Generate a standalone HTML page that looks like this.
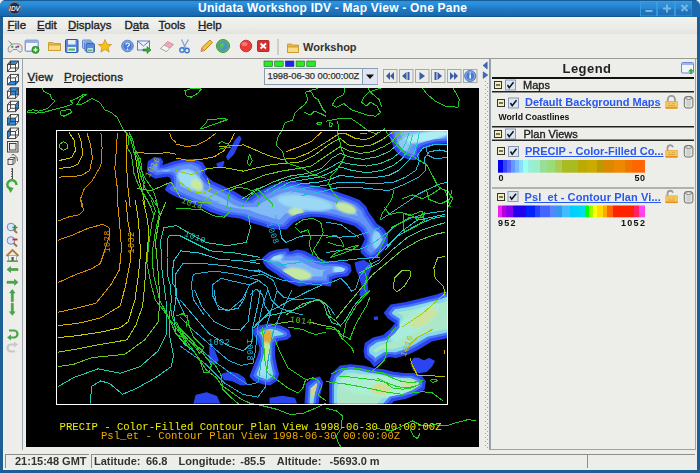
<!DOCTYPE html>
<html><head><meta charset="utf-8">
<style>
*{margin:0;padding:0;box-sizing:border-box}
html,body{width:700px;height:473px;overflow:hidden;background:#edede9;font-family:"Liberation Sans",sans-serif;color:#222}
.a{position:absolute}
.t{position:absolute;white-space:nowrap;line-height:1}
#title{left:0;top:0;width:700px;height:17px;background:linear-gradient(#1a5c94 0,#1a5c94 1px,#2a92e2 1px,#2890de 4px,#1f78c2 9px,#1a6aae 15px,#14609e 16px,#0e4c82 17px)}
#frameL{left:0;top:17px;width:3px;height:456px;background:#1d5f95}
#frameR{left:697px;top:17px;width:3px;height:456px;background:#1d5f95}
#frameB{left:0;top:470px;width:700px;height:3px;background:#1d5f95}
.menu{font-size:11.5px;top:19.8px;color:#222;-webkit-text-stroke:0.35px #222}
.u{text-decoration:underline;text-underline-offset:0.7px}
svg{position:absolute;overflow:visible}
.st{top:455.5px;font-size:11px;font-weight:bold;color:#333}
</style></head><body>
<div id="title" class="a"></div>
<div class="t" style="left:198px;top:2px;font-size:12px;font-weight:bold;color:#fff;letter-spacing:0.21px">Unidata Workshop IDV - Map View - One Pane</div>
<svg style="left:0;top:0" width="700" height="17" viewBox="0 0 700 17">
<defs><linearGradient id="tb" x1="0" y1="0" x2="0" y2="1"><stop offset="0" stop-color="#3296de"/><stop offset="0.5" stop-color="#2886d0"/><stop offset="0.55" stop-color="#2078c0"/><stop offset="1" stop-color="#1c6eb4"/></linearGradient></defs>
<g fill="url(#tb)" stroke="#3d9ee6" stroke-width="0.8">
<rect x="640.5" y="1.5" width="16" height="14.5"/>
<rect x="657.5" y="1.5" width="17" height="14.5"/>
<rect x="675.5" y="1.5" width="16.5" height="14.5"/>
</g>
<path d="M645.5,11 L652.5,11" stroke="#78b6e2" stroke-width="2"/>
<path d="M663,8.5 L671,8.5 M667,4.5 L667,12.5" stroke="#78b6e2" stroke-width="2"/>
<path d="M681.5,5 L687.5,11 M687.5,5 L681.5,11" stroke="#78b6e2" stroke-width="2"/>
<path d="M0,0 L4,0 Q1,1 0,4Z" fill="#edede9"/>
<circle cx="14.5" cy="8.2" r="5.8" fill="#1a2a5a" stroke="#8a7a40" stroke-width="0.8"/>
<text x="14.5" y="10.6" fill="#e8e8f0" font-family="Liberation Sans" font-weight="bold" font-size="6.5" text-anchor="middle" font-style="italic">IDV</text>
<path d="M692,1 L696,1 Q699,2 700,6 L700,17 L692,17Z" fill="#1a6aae"/>
<path d="M696,0 L700,0 L700,4 Q699,1 696,0Z" fill="#edede9"/>
</svg>
<div class="a" style="left:0;top:17px;width:700px;height:17px;background:linear-gradient(#f2f2ee,#ecece8 60%,#e2e2de)"></div>
<div id="frameL" class="a"></div><div id="frameR" class="a"></div><div id="frameB" class="a"></div>

<!-- menu bar -->
<div class="t menu" style="left:7.5px"><span class="u">F</span>ile</div>
<div class="t menu" style="left:37px"><span class="u">E</span>dit</div>
<div class="t menu" style="left:68px"><span class="u">D</span>isplays</div>
<div class="t menu" style="left:124.5px">D<span class="u">a</span>ta</div>
<div class="t menu" style="left:158.5px"><span class="u">T</span>ools</div>
<div class="t menu" style="left:198px"><span class="u">H</span>elp</div>

<!-- toolbar bottom line -->
<div class="a" style="left:3px;top:58px;width:694px;height:1px;background:#9a9a96"></div>

<svg style="left:0;top:0" width="700" height="60" viewBox="0 0 700 60">
<!-- 1 gamepad -->
<g>
<path d="M8.5,41 L12.5,44.5" stroke="#777" stroke-width="1" fill="none"/>
<path d="M10,45.5 C12,43.5 18,43 21,45 C22.5,47 22.5,50.5 21,52 C19.5,52.5 18,51 17,49.5 L13,49.5 C12,51 10.5,52.5 9,52 C7.5,50.5 8,47 10,45.5Z" fill="#e8e8e8" stroke="#8a8a8a" stroke-width="0.9"/>
<circle cx="18.2" cy="46.6" r="1.1" fill="#d42020"/><circle cx="16.3" cy="47.3" r="1" fill="#3060d0"/>
<path d="M11,46.8 L13.5,46.8 M12.2,45.6 L12.2,48" stroke="#30a030" stroke-width="1"/>
</g>
<!-- 2 window with green plus -->
<g>
<rect x="25.2" y="40.2" width="13" height="11" rx="1" fill="#f4f6fa" stroke="#5a7ec8" stroke-width="1"/>
<rect x="25.7" y="40.7" width="12" height="2.3" fill="#8fb0e8"/>
<circle cx="35.5" cy="49.8" r="3.6" fill="#3aa83a" stroke="#1e7a1e" stroke-width="0.7"/>
<path d="M35.5,47.8 L35.5,51.8 M33.5,49.8 L37.5,49.8" stroke="#fff" stroke-width="1.2"/>
</g>
<!-- 3 folder -->
<g>
<path d="M48.5,42.5 L53,42.5 L54,43.5 L60.5,43.5 L60.5,50.5 L48.5,50.5Z" fill="#e8b84a" stroke="#c8922a" stroke-width="0.8"/>
<path d="M48.5,45 L60.5,45 L60.5,50.5 L48.5,50.5Z" fill="#f8dc80" stroke="#c8922a" stroke-width="0.8"/>
</g>
<!-- 4 floppy -->
<g>
<rect x="65.5" y="39.5" width="12.5" height="13" rx="1.2" fill="#5a86d8" stroke="#2a56a8" stroke-width="1"/>
<rect x="68" y="40" width="7.5" height="4.5" fill="#e8eef8"/>
<rect x="67.5" y="47" width="8.5" height="5" fill="#e8f0f8"/>
<rect x="68.5" y="48.5" width="6.5" height="2.2" fill="#58b858"/>
</g>
<!-- 5 multi floppy -->
<g>
<rect x="82.5" y="40" width="8.5" height="8.5" rx="1" fill="#a8c4ec" stroke="#4a76c8" stroke-width="0.8"/>
<rect x="84.5" y="42" width="8.5" height="8.5" rx="1" fill="#a8c4ec" stroke="#4a76c8" stroke-width="0.8"/>
<rect x="86" y="43.5" width="8.5" height="8.8" rx="1" fill="#5a86d8" stroke="#2a56a8" stroke-width="0.8"/>
<rect x="87.5" y="48.2" width="5.5" height="3.6" fill="#e8f0f8"/>
<rect x="88" y="49.5" width="4.5" height="1.6" fill="#58b858"/>
</g>
<!-- 6 star -->
<path d="M105,39.5 L106.9,44.3 L111.6,44.5 L107.9,47.5 L109.2,52 L105,49.4 L100.8,52 L102.1,47.5 L98.4,44.5 L103.1,44.3Z" fill="#f5c21a" stroke="#d09010" stroke-width="0.8"/>
<!-- 7 help -->
<g>
<circle cx="127.5" cy="46" r="5.8" fill="#7aa4e8" stroke="#4a74c0" stroke-width="0.9"/>
<circle cx="127.5" cy="46" r="4" fill="#4a7ad0"/>
<path d="M125.8,44.6 C125.8,42.5 129.3,42.5 129.3,44.5 C129.3,45.8 127.5,46 127.5,47.3" stroke="#fff" stroke-width="1.2" fill="none"/>
<circle cx="127.5" cy="49.2" r="0.8" fill="#fff"/>
</g>
<!-- 8 mail -->
<g>
<rect x="137.5" y="41" width="12" height="9" fill="#eef2fa" stroke="#5a7ec8" stroke-width="1"/>
<path d="M137.5,41 L143.5,46 L149.5,41" stroke="#5a7ec8" stroke-width="1" fill="none"/>
<path d="M143,49 L147,49 L147,46.5 L151,50 L147,53.5 L147,51 L143,51Z" fill="#3aa83a" stroke="#1e7a1e" stroke-width="0.6"/>
</g>
<!-- 9 eraser -->
<g>
<path d="M160.5,48.5 L167.5,41.5 L173.5,44.5 L166.5,51.5Z" fill="#f0a8b8" stroke="#c88898" stroke-width="0.8"/>
<path d="M160.5,48.5 L164,45 L170,48 L166.5,51.5Z" fill="#f4f4f4" stroke="#a0a0a0" stroke-width="0.8"/>
</g>
<!-- 10 scissors -->
<g stroke="#3a78d0" fill="none">
<path d="M181.5,39.5 L185.5,48 M188.5,39.5 L183.5,48" stroke-width="1.2" stroke="#7aa0d8"/>
<circle cx="182" cy="50" r="2.2" stroke-width="1.4"/>
<circle cx="187" cy="50.5" r="2.2" stroke-width="1.4"/>
</g>
<!-- 11 pencil -->
<g>
<path d="M201,51.5 L202,47.5 L210,40 L212.5,42.5 L204.5,50.5Z" fill="#f0c040" stroke="#b88010" stroke-width="0.9"/>
<path d="M201,51.5 L202,47.5 L204.5,50.5Z" fill="#e89060"/>
</g>
<!-- 12 globe -->
<g>
<circle cx="223" cy="46" r="6.5" fill="#58b858" stroke="#3a8a3a" stroke-width="0.9"/>
<circle cx="223" cy="46" r="4.6" fill="#4a90d8"/>
<path d="M220,43.5 L223.5,42.5 L225,45 L222.5,47.5 L221.5,49.5 L220,47Z" fill="#58c058"/>
</g>
<!-- 13 red circle -->
<circle cx="246" cy="46" r="5.8" fill="#ea3a3a" stroke="#c02020" stroke-width="0.8"/>
<ellipse cx="244.5" cy="44" rx="3" ry="2" fill="#f89090" opacity="0.7"/>
<!-- 14 red X -->
<g>
<rect x="257.5" y="40.5" width="11.5" height="11" rx="1" fill="#d83030" stroke="#a01818" stroke-width="0.8"/>
<path d="M260.5,43.5 L266,48.5 M266,43.5 L260.5,48.5" stroke="#fff" stroke-width="1.8"/>
</g>
<!-- separator -->
<rect x="277.5" y="39" width="1" height="16" fill="#b0b0ac"/>
<!-- folder -->
<g>
<path d="M287.5,44 L291.5,44 L292.5,45 L298.5,45 L298.5,52.5 L287.5,52.5Z" fill="#e8b84a" stroke="#c8922a" stroke-width="0.8"/>
<path d="M287.5,47 L298.5,47 L298.5,52.5 L287.5,52.5Z" fill="#f8dc80" stroke="#c8922a" stroke-width="0.8"/>
</g>
</svg>
<div class="t" style="left:303px;top:42px;font-size:11px;font-weight:bold;color:#333">Workshop</div>

<!-- left toolbar -->
<svg style="left:0;top:0" width="24" height="360" viewBox="0 0 24 360">
<defs>
<g id="cube" fill="none" stroke="#3a3a3a" stroke-width="0.9">
<rect x="7.5" y="64.5" width="8" height="7"/>
<rect x="10.5" y="61" width="8" height="7"/>
<path d="M7.5,64.5 L10.5,61 M15.5,64.5 L18.5,61 M15.5,71.5 L18.5,68 M7.5,71.5 L10.5,68"/>
</g>
<path id="cubebg" d="M7.5,64.5 L10.5,61 L18.5,61 L18.5,68 L15.5,71.5 L7.5,71.5Z" fill="#fafafa"/>
</defs>
<!-- cube 1 top -->
<use href="#cubebg"/><path d="M7.5,64.5 L10.5,61 L18.5,61 L15.5,64.5Z" fill="#2a8ae0"/>
<use href="#cube"/>
<!-- cube 2 bottom -->
<g transform="translate(0,13.4)"><use href="#cubebg"/><path d="M7.5,71.5 L10.5,68 L18.5,68 L15.5,71.5Z" fill="#2a8ae0"/><use href="#cube"/></g>
<!-- cube 3 back -->
<g transform="translate(0,26.8)"><use href="#cubebg"/><rect x="10.5" y="61" width="8" height="7" fill="#2a8ae0"/><use href="#cube"/></g>
<!-- cube 4 right -->
<g transform="translate(0,40.2)"><use href="#cubebg"/><path d="M15.5,64.5 L18.5,61 L18.5,68 L15.5,71.5Z" fill="#2a8ae0"/><use href="#cube"/></g>
<!-- cube 5 front -->
<g transform="translate(0,53.6)"><use href="#cubebg"/><rect x="7.5" y="64.5" width="8" height="7" fill="#2a8ae0"/><use href="#cube"/></g>
<!-- cube 6 left -->
<g transform="translate(0,67)"><use href="#cubebg"/><path d="M7.5,64.5 L10.5,61 L10.5,68 L7.5,71.5Z" fill="#2a8ae0"/><use href="#cube"/></g>
<!-- frame -->
<g fill="none" stroke="#333" stroke-width="0.9">
<rect x="7.5" y="141.5" width="10.5" height="10.5"/>
<rect x="9.5" y="143.5" width="6.5" height="6.5"/>
</g>
<!-- rotate -->
<g fill="none" stroke="#333" stroke-width="0.8">
<rect x="8" y="159.5" width="5" height="5"/>
<path d="M8,159.5 L10,157.5 L15,157.5 L13,159.5 M15,157.5 L15,162.5 L13,164.5"/>
<path d="M11.5,155 L14,154.5 L17,157.5 L17.5,161" />
</g>
<!-- ruler -->
<path d="M12.5,168 L12.5,179 M11,169 L12.5,169 M11,171.5 L12.5,171.5 M11,174 L12.5,174 M11,176.5 L12.5,176.5 M11,179 L12.5,179" stroke="#444" stroke-width="0.9" fill="none"/>
<!-- green refresh -->
<path d="M9.2,188.5 A4.6,4.6 0 1 1 16.5,185" fill="none" stroke="#3aa83a" stroke-width="2.4"/>
<path d="M7,186 L10.5,193 L13.5,188Z" fill="#3aa83a"/>
<!-- zoom + -->
<g>
<circle cx="11" cy="227" r="3.8" fill="#d8e4f8" stroke="#6a8ad0" stroke-width="1"/>
<path d="M13.5,229.5 L17,233" stroke="#a07040" stroke-width="1.8"/>
<path d="M15,225 L15,230 M12.5,227.5 L17.5,227.5" stroke="#2a9a2a" stroke-width="1.6"/>
</g>
<!-- zoom - -->
<g>
<circle cx="11" cy="240.5" r="3.8" fill="#d8e4f8" stroke="#6a8ad0" stroke-width="1"/>
<path d="M13.5,243 L17,246.5" stroke="#a07040" stroke-width="1.8"/>
<path d="M12.5,239.5 L17.5,239.5" stroke="#e02020" stroke-width="1.8"/>
</g>
<!-- house -->
<g>
<path d="M6.5,256 L12.5,250 L18.5,256" fill="none" stroke="#b87830" stroke-width="1.8"/>
<rect x="8.5" y="255.5" width="8" height="5.5" fill="#f0f0f0" stroke="#888" stroke-width="0.6"/>
<rect x="11.5" y="257" width="2.2" height="4" fill="#555"/>
<rect x="7" y="260.5" width="11" height="1.5" fill="#4aa84a"/>
</g>
<!-- left arrow -->
<path d="M7,269.5 L10.5,266.5 L10.5,268.5 L18,268.5 L18,270.5 L10.5,270.5 L10.5,272.5Z" fill="#4aa84a" stroke="#2a882a" stroke-width="0.5"/>
<!-- right arrow -->
<path d="M18,282.3 L14.5,279.3 L14.5,281.3 L7,281.3 L7,283.3 L14.5,283.3 L14.5,285.3Z" fill="#4aa84a" stroke="#2a882a" stroke-width="0.5"/>
<!-- up arrow -->
<path d="M12.3,289.5 L15,293 L13.3,293 L13.3,301.5 L11.3,301.5 L11.3,293 L9.6,293Z" fill="#4aa84a" stroke="#2a882a" stroke-width="0.5"/>
<!-- down arrow -->
<path d="M12.3,315.3 L15,311.8 L13.3,311.8 L13.3,303.3 L11.3,303.3 L11.3,311.8 L9.6,311.8Z" fill="#4aa84a" stroke="#2a882a" stroke-width="0.5"/>
<!-- green uturn -->
<path d="M9,330.5 L14,330.5 A3.5,3.5 0 0 1 14,337.5 L10,337.5" fill="none" stroke="#4aa84a" stroke-width="2.2"/>
<path d="M7,337.5 L11,334.5 L11,340.5Z" fill="#4aa84a"/>
<!-- gray uturn -->
<path d="M16,344.5 L11,344.5 A3.5,3.5 0 0 0 11,351.5 L15,351.5" fill="none" stroke="#c8c8c8" stroke-width="2.2"/>
<path d="M18,344.5 L14,341.5 L14,347.5Z" fill="#c8c8c8"/>
</svg>


<!-- map panel -->
<div class="a" style="left:21.5px;top:59px;width:1px;height:391px;background:#9aa3b0"></div>
<div class="t" style="left:27.5px;top:71.8px;font-size:11.5px;letter-spacing:0.2px;-webkit-text-stroke:0.35px #222"><span class="u">V</span>iew</div>
<div class="t" style="left:64px;top:71.8px;font-size:11.5px;letter-spacing:0.2px;-webkit-text-stroke:0.35px #222"><span class="u">P</span>rojections</div>

<svg style="left:0;top:0" width="700" height="90" viewBox="0 0 700 90">
<g stroke="#226622" stroke-width="0.6">
<rect x="264" y="61" width="8.5" height="5.5" fill="#22ee22"/>
<rect x="274.7" y="61" width="8.5" height="5.5" fill="#22ee22"/>
<rect x="285.4" y="61" width="8.5" height="5.5" fill="#2222ee" stroke="#222266"/>
<rect x="296.1" y="61" width="8.5" height="5.5" fill="#22ee22"/>
<rect x="306.8" y="61" width="8.5" height="5.5" fill="#22ee22"/>
</g>
<!-- combo -->
<rect x="264.5" y="68.5" width="113" height="16" fill="#f2f2ee" stroke="#8c9cb0" stroke-width="1"/>
<rect x="362.5" y="69" width="15" height="15" fill="#dde6f2"/>
<path d="M362.5,68.5 L362.5,84.5" stroke="#8c9cb0" stroke-width="1"/>
<path d="M366,74.5 L374,74.5 L370,79Z" fill="#111"/>
<!-- anim buttons -->
<g fill="#ecece8" stroke="#a8a8a4" stroke-width="1">
<rect x="383.5" y="69.5" width="13.5" height="13"/>
<rect x="399.5" y="69.5" width="13.5" height="13"/>
<rect x="415.5" y="69.5" width="13.5" height="13"/>
<rect x="431.5" y="69.5" width="13.5" height="13"/>
<rect x="447.5" y="69.5" width="13.5" height="13"/>
<rect x="463.5" y="69.5" width="13.5" height="13"/>
</g>
<g fill="#3a5aaa">
<path d="M386,76 L390,72 L390,80Z M390,76 L394,72 L394,80Z"/>
<path d="M402,76 L406.5,72 L406.5,80Z M407.5,72 L409.5,72 L409.5,80 L407.5,80Z"/>
<path d="M419.5,72 L425,76 L419.5,80Z"/>
<path d="M434.5,72 L436.5,72 L436.5,80 L434.5,80Z M437.5,72 L442,76 L437.5,80Z"/>
<path d="M450,72 L454,76 L450,80Z M454,72 L458,76 L454,80Z"/>
</g>
<circle cx="470.2" cy="76" r="5.6" fill="#7aa4e8" stroke="#4a74c0" stroke-width="0.9"/>
<circle cx="470.2" cy="76" r="3.8" fill="#4a7ad0"/>
<rect x="469.4" y="74.5" width="1.6" height="4" fill="#fff"/>
<circle cx="470.2" cy="73" r="0.8" fill="#fff"/>
</svg>
<div class="t" style="left:267.5px;top:71.4px;font-size:9.4px;color:#333;letter-spacing:-0.05px;-webkit-text-stroke:0.25px #333">1998-06-30 00:00:00Z</div>


<div id="map" class="a" style="left:26px;top:87.5px;width:453px;height:359.5px;background:#000"></div>
<svg style="left:0;top:0" width="700" height="473" viewBox="0 0 700 473">
<defs>
<clipPath id="mc"><rect x="26" y="87.5" width="453" height="359.5"/></clipPath>
<clipPath id="rc"><rect x="57" y="131.5" width="390" height="272"/></clipPath>
<filter id="er2" x="0" y="0" width="1" height="1"><feMorphology operator="erode" radius="2"/></filter>
<filter id="er4" x="0" y="0" width="1" height="1"><feMorphology operator="erode" radius="4"/></filter>
<filter id="bl" x="-0.1" y="-0.1" width="1.2" height="1.2"><feGaussianBlur stdDeviation="1.2"/></filter>
<filter id="er8" x="0" y="0" width="1" height="1"><feMorphology operator="erode" radius="8"/></filter>
<filter id="er6" x="0" y="0" width="1" height="1"><feMorphology operator="erode" radius="6.5"/></filter>
</defs>
<g clip-path="url(#rc)">
<path d="M148.6,161.8 L153.9,158.1 L160.4,158.6 L162.5,161.8 L161.4,166.1 L167.9,163.9 L174.3,161.8 L182.9,160.3 L193.6,159.6 L202.1,162.9 L205.4,168.2 L204.3,173.6 L208.6,178.9 L212.9,182.1 L224.3,187.3 L234.6,192.4 L241.4,196.7 L248.3,199.3 L255.1,194.1 L262.0,190.7 L268.9,187.3 L275.7,184.7 L284.3,183.0 L292.9,182.1 L301.4,183.5 L312.1,185.7 L322.9,187.9 L335.7,192.1 L348.6,196.4 L359.3,200.7 L365.7,207.1 L367.9,212.5 L372.1,217.9 L376.4,224.3 L382.9,228.6 L387.1,235.0 L387.1,243.6 L382.9,250.0 L376.4,256.4 L370.0,258.6 L365.7,256.4 L361.4,252.1 L361.4,247.9 L365.7,239.3 L361.4,230.7 L355.0,225.4 L344.3,222.1 L333.6,218.9 L322.9,216.8 L312.1,215.7 L301.4,217.9 L292.9,222.1 L288.6,226.4 L286.0,228.8 L275.7,228.4 L267.1,226.7 L258.6,224.1 L250.0,221.6 L241.4,218.1 L231.1,216.4 L220.9,214.7 L210.6,211.3 L200.3,206.1 L190.0,201.9 L176.4,196.1 L170.0,192.9 L165.7,189.6 L167.9,185.4 L172.1,182.1 L171.1,177.9 L167.9,175.7 L161.4,176.8 L155.0,177.9 L149.6,174.6 L147.5,169.3Z M388.9,120.0 L460.0,120.0 L460.0,142.1 L438.6,143.3 L429.4,145.6 L422.6,147.9 L419.1,151.3 L418.0,157.0 L415.7,159.3 L410.0,159.3 L404.3,157.0 L398.6,153.6 L395.1,149.0 L392.9,143.3 L390.6,137.6Z M262.9,258.3 L269.7,252.6 L276.6,250.3 L288.0,249.1 L289.1,252.6 L297.1,250.3 L304.0,251.4 L308.6,253.7 L315.4,257.1 L320.0,259.4 L326.9,261.7 L336.0,261.7 L345.1,262.9 L349.7,265.1 L350.9,270.9 L347.4,275.4 L338.3,276.6 L331.4,278.9 L330.3,285.7 L320.0,284.6 L308.6,284.6 L299.4,285.7 L290.3,282.3 L281.1,276.6 L274.3,272.0 L267.4,267.4 L264.0,262.9Z M217.1,163.9 L223.6,161.8 L222.5,166.1 L218.2,166.7Z M226.8,156.8 L230.6,150.5 L235.6,140.3 L239.5,136.5 L240.7,139.0 L236.9,146.6 L233.1,154.3 L228.0,159.3Z M413.8,358.6 L418.8,358.6 L423.9,361.1 L429.0,358.6 L434.1,361.1 L431.5,366.2 L426.4,371.3 L418.8,372.6 L413.8,370.0 L411.2,363.7Z M374.4,317.5 L377.0,317.0 L377.5,319.0 L374.9,319.3Z M222.1,374.3 L230.1,372.3 L238.1,374.3 L244.2,378.3 L246.2,384.4 L240.2,384.4 L232.1,380.4 L224.1,379.3Z M210.0,346.2 L214.0,350.2 L218.0,360.3 L214.0,364.3 L210.0,362.3Z M270.3,398.4 L282.4,396.4 L294.4,398.4 L300.5,415.0 L270.3,415.0Z M355.4,262.9 L363.4,260.6 L371.4,265.1 L370.3,269.7 L368.0,274.3 L366.9,285.7 L368.0,292.6 L363.4,297.1 L360.0,294.9 L362.3,285.7 L358.9,274.3 L356.6,269.7Z M191.2,415.0 L196.3,395.5 L206.5,393.0 L216.6,396.8 L224.2,415.0Z M269.9,415.0 L277.5,399.3 L287.7,400.6 L292.8,415.0Z M365.5,343.4 L373.1,338.3 L383.3,335.8 L390.9,329.4 L396.0,323.1 L388.4,318.0 L384.6,312.9 L390.9,305.3 L406.1,302.8 L421.4,299.0 L436.6,295.2 L443.5,292.6 L460.0,292.6 L460.0,334.5 L431.5,340.8 L418.8,348.5 L408.7,353.5 L396.0,357.3 L388.4,356.1 L380.8,361.1 L374.4,366.2 L370.6,361.1 L365.5,357.3 L364.3,351.0Z M332.5,373.8 L340.2,366.2 L350.3,364.9 L363.0,366.2 L373.1,368.8 L383.3,370.0 L393.5,372.6 L403.6,373.8 L413.8,373.8 L421.4,376.4 L425.2,381.4 L423.9,389.1 L416.3,394.1 L406.1,397.9 L393.5,400.5 L380.8,415.0 L330.0,415.0 L330.0,381.4Z M253.2,330.1 L260.3,326.1 L270.3,324.1 L280.4,326.1 L288.4,330.1 L290.4,336.1 L286.4,339.1 L278.3,340.2 L274.3,345.2 L274.3,356.2 L276.3,366.3 L278.3,374.3 L276.3,380.4 L270.3,384.4 L262.3,383.4 L254.2,380.4 L250.2,376.3 L254.2,366.3 L258.2,356.2 L260.3,348.2 L258.2,340.2 L254.2,334.1Z M304.5,415.0 L306.5,384.4 L312.5,379.3 L319.5,377.3 L322.6,382.4 L320.6,390.4 L318.5,398.4 L316.5,415.0Z" fill="#2a44ee" stroke="#2a44ee" stroke-width="1.5" stroke-linejoin="round"/>
<path d="M365.5,343.4 L373.1,338.3 L383.3,335.8 L390.9,329.4 L396.0,323.1 L388.4,318.0 L384.6,312.9 L390.9,305.3 L406.1,302.8 L421.4,299.0 L436.6,295.2 L443.5,292.6 L460.0,292.6 L460.0,334.5 L431.5,340.8 L418.8,348.5 L408.7,353.5 L396.0,357.3 L388.4,356.1 L380.8,361.1 L374.4,366.2 L370.6,361.1 L365.5,357.3 L364.3,351.0Z M332.5,373.8 L340.2,366.2 L350.3,364.9 L363.0,366.2 L373.1,368.8 L383.3,370.0 L393.5,372.6 L403.6,373.8 L413.8,373.8 L421.4,376.4 L425.2,381.4 L423.9,389.1 L416.3,394.1 L406.1,397.9 L393.5,400.5 L380.8,415.0 L330.0,415.0 L330.0,381.4Z M253.2,330.1 L260.3,326.1 L270.3,324.1 L280.4,326.1 L288.4,330.1 L290.4,336.1 L286.4,339.1 L278.3,340.2 L274.3,345.2 L274.3,356.2 L276.3,366.3 L278.3,374.3 L276.3,380.4 L270.3,384.4 L262.3,383.4 L254.2,380.4 L250.2,376.3 L254.2,366.3 L258.2,356.2 L260.3,348.2 L258.2,340.2 L254.2,334.1Z M304.5,415.0 L306.5,384.4 L312.5,379.3 L319.5,377.3 L322.6,382.4 L320.6,390.4 L318.5,398.4 L316.5,415.0Z" fill="#4a78f6" filter="url(#er2)"/>
<path d="M365.5,343.4 L373.1,338.3 L383.3,335.8 L390.9,329.4 L396.0,323.1 L388.4,318.0 L384.6,312.9 L390.9,305.3 L406.1,302.8 L421.4,299.0 L436.6,295.2 L443.5,292.6 L460.0,292.6 L460.0,334.5 L431.5,340.8 L418.8,348.5 L408.7,353.5 L396.0,357.3 L388.4,356.1 L380.8,361.1 L374.4,366.2 L370.6,361.1 L365.5,357.3 L364.3,351.0Z M332.5,373.8 L340.2,366.2 L350.3,364.9 L363.0,366.2 L373.1,368.8 L383.3,370.0 L393.5,372.6 L403.6,373.8 L413.8,373.8 L421.4,376.4 L425.2,381.4 L423.9,389.1 L416.3,394.1 L406.1,397.9 L393.5,400.5 L380.8,415.0 L330.0,415.0 L330.0,381.4Z M253.2,330.1 L260.3,326.1 L270.3,324.1 L280.4,326.1 L288.4,330.1 L290.4,336.1 L286.4,339.1 L278.3,340.2 L274.3,345.2 L274.3,356.2 L276.3,366.3 L278.3,374.3 L276.3,380.4 L270.3,384.4 L262.3,383.4 L254.2,380.4 L250.2,376.3 L254.2,366.3 L258.2,356.2 L260.3,348.2 L258.2,340.2 L254.2,334.1Z M304.5,415.0 L306.5,384.4 L312.5,379.3 L319.5,377.3 L322.6,382.4 L320.6,390.4 L318.5,398.4 L316.5,415.0Z" fill="#88d8ec" filter="url(#er4)"/>
<path d="M365.5,343.4 L373.1,338.3 L383.3,335.8 L390.9,329.4 L396.0,323.1 L388.4,318.0 L384.6,312.9 L390.9,305.3 L406.1,302.8 L421.4,299.0 L436.6,295.2 L443.5,292.6 L460.0,292.6 L460.0,334.5 L431.5,340.8 L418.8,348.5 L408.7,353.5 L396.0,357.3 L388.4,356.1 L380.8,361.1 L374.4,366.2 L370.6,361.1 L365.5,357.3 L364.3,351.0Z M332.5,373.8 L340.2,366.2 L350.3,364.9 L363.0,366.2 L373.1,368.8 L383.3,370.0 L393.5,372.6 L403.6,373.8 L413.8,373.8 L421.4,376.4 L425.2,381.4 L423.9,389.1 L416.3,394.1 L406.1,397.9 L393.5,400.5 L380.8,415.0 L330.0,415.0 L330.0,381.4Z M253.2,330.1 L260.3,326.1 L270.3,324.1 L280.4,326.1 L288.4,330.1 L290.4,336.1 L286.4,339.1 L278.3,340.2 L274.3,345.2 L274.3,356.2 L276.3,366.3 L278.3,374.3 L276.3,380.4 L270.3,384.4 L262.3,383.4 L254.2,380.4 L250.2,376.3 L254.2,366.3 L258.2,356.2 L260.3,348.2 L258.2,340.2 L254.2,334.1Z M304.5,415.0 L306.5,384.4 L312.5,379.3 L319.5,377.3 L322.6,382.4 L320.6,390.4 L318.5,398.4 L316.5,415.0Z" fill="#ace8c8" filter="url(#er6)"/>
<path d="M148.6,161.8 L153.9,158.1 L160.4,158.6 L162.5,161.8 L161.4,166.1 L167.9,163.9 L174.3,161.8 L182.9,160.3 L193.6,159.6 L202.1,162.9 L205.4,168.2 L204.3,173.6 L208.6,178.9 L212.9,182.1 L224.3,187.3 L234.6,192.4 L241.4,196.7 L248.3,199.3 L255.1,194.1 L262.0,190.7 L268.9,187.3 L275.7,184.7 L284.3,183.0 L292.9,182.1 L301.4,183.5 L312.1,185.7 L322.9,187.9 L335.7,192.1 L348.6,196.4 L359.3,200.7 L365.7,207.1 L367.9,212.5 L372.1,217.9 L376.4,224.3 L382.9,228.6 L387.1,235.0 L387.1,243.6 L382.9,250.0 L376.4,256.4 L370.0,258.6 L365.7,256.4 L361.4,252.1 L361.4,247.9 L365.7,239.3 L361.4,230.7 L355.0,225.4 L344.3,222.1 L333.6,218.9 L322.9,216.8 L312.1,215.7 L301.4,217.9 L292.9,222.1 L288.6,226.4 L286.0,228.8 L275.7,228.4 L267.1,226.7 L258.6,224.1 L250.0,221.6 L241.4,218.1 L231.1,216.4 L220.9,214.7 L210.6,211.3 L200.3,206.1 L190.0,201.9 L176.4,196.1 L170.0,192.9 L165.7,189.6 L167.9,185.4 L172.1,182.1 L171.1,177.9 L167.9,175.7 L161.4,176.8 L155.0,177.9 L149.6,174.6 L147.5,169.3Z M388.9,120.0 L460.0,120.0 L460.0,142.1 L438.6,143.3 L429.4,145.6 L422.6,147.9 L419.1,151.3 L418.0,157.0 L415.7,159.3 L410.0,159.3 L404.3,157.0 L398.6,153.6 L395.1,149.0 L392.9,143.3 L390.6,137.6Z M262.9,258.3 L269.7,252.6 L276.6,250.3 L288.0,249.1 L289.1,252.6 L297.1,250.3 L304.0,251.4 L308.6,253.7 L315.4,257.1 L320.0,259.4 L326.9,261.7 L336.0,261.7 L345.1,262.9 L349.7,265.1 L350.9,270.9 L347.4,275.4 L338.3,276.6 L331.4,278.9 L330.3,285.7 L320.0,284.6 L308.6,284.6 L299.4,285.7 L290.3,282.3 L281.1,276.6 L274.3,272.0 L267.4,267.4 L264.0,262.9Z" fill="#4a6ef6" filter="url(#er2)"/>
<path d="M148.6,161.8 L153.9,158.1 L160.4,158.6 L162.5,161.8 L161.4,166.1 L167.9,163.9 L174.3,161.8 L182.9,160.3 L193.6,159.6 L202.1,162.9 L205.4,168.2 L204.3,173.6 L208.6,178.9 L212.9,182.1 L224.3,187.3 L234.6,192.4 L241.4,196.7 L248.3,199.3 L255.1,194.1 L262.0,190.7 L268.9,187.3 L275.7,184.7 L284.3,183.0 L292.9,182.1 L301.4,183.5 L312.1,185.7 L322.9,187.9 L335.7,192.1 L348.6,196.4 L359.3,200.7 L365.7,207.1 L367.9,212.5 L372.1,217.9 L376.4,224.3 L382.9,228.6 L387.1,235.0 L387.1,243.6 L382.9,250.0 L376.4,256.4 L370.0,258.6 L365.7,256.4 L361.4,252.1 L361.4,247.9 L365.7,239.3 L361.4,230.7 L355.0,225.4 L344.3,222.1 L333.6,218.9 L322.9,216.8 L312.1,215.7 L301.4,217.9 L292.9,222.1 L288.6,226.4 L286.0,228.8 L275.7,228.4 L267.1,226.7 L258.6,224.1 L250.0,221.6 L241.4,218.1 L231.1,216.4 L220.9,214.7 L210.6,211.3 L200.3,206.1 L190.0,201.9 L176.4,196.1 L170.0,192.9 L165.7,189.6 L167.9,185.4 L172.1,182.1 L171.1,177.9 L167.9,175.7 L161.4,176.8 L155.0,177.9 L149.6,174.6 L147.5,169.3Z M388.9,120.0 L460.0,120.0 L460.0,142.1 L438.6,143.3 L429.4,145.6 L422.6,147.9 L419.1,151.3 L418.0,157.0 L415.7,159.3 L410.0,159.3 L404.3,157.0 L398.6,153.6 L395.1,149.0 L392.9,143.3 L390.6,137.6Z M262.9,258.3 L269.7,252.6 L276.6,250.3 L288.0,249.1 L289.1,252.6 L297.1,250.3 L304.0,251.4 L308.6,253.7 L315.4,257.1 L320.0,259.4 L326.9,261.7 L336.0,261.7 L345.1,262.9 L349.7,265.1 L350.9,270.9 L347.4,275.4 L338.3,276.6 L331.4,278.9 L330.3,285.7 L320.0,284.6 L308.6,284.6 L299.4,285.7 L290.3,282.3 L281.1,276.6 L274.3,272.0 L267.4,267.4 L264.0,262.9Z" fill="#6292f7" filter="url(#er4)"/>
<path d="M148.6,161.8 L153.9,158.1 L160.4,158.6 L162.5,161.8 L161.4,166.1 L167.9,163.9 L174.3,161.8 L182.9,160.3 L193.6,159.6 L202.1,162.9 L205.4,168.2 L204.3,173.6 L208.6,178.9 L212.9,182.1 L224.3,187.3 L234.6,192.4 L241.4,196.7 L248.3,199.3 L255.1,194.1 L262.0,190.7 L268.9,187.3 L275.7,184.7 L284.3,183.0 L292.9,182.1 L301.4,183.5 L312.1,185.7 L322.9,187.9 L335.7,192.1 L348.6,196.4 L359.3,200.7 L365.7,207.1 L367.9,212.5 L372.1,217.9 L376.4,224.3 L382.9,228.6 L387.1,235.0 L387.1,243.6 L382.9,250.0 L376.4,256.4 L370.0,258.6 L365.7,256.4 L361.4,252.1 L361.4,247.9 L365.7,239.3 L361.4,230.7 L355.0,225.4 L344.3,222.1 L333.6,218.9 L322.9,216.8 L312.1,215.7 L301.4,217.9 L292.9,222.1 L288.6,226.4 L286.0,228.8 L275.7,228.4 L267.1,226.7 L258.6,224.1 L250.0,221.6 L241.4,218.1 L231.1,216.4 L220.9,214.7 L210.6,211.3 L200.3,206.1 L190.0,201.9 L176.4,196.1 L170.0,192.9 L165.7,189.6 L167.9,185.4 L172.1,182.1 L171.1,177.9 L167.9,175.7 L161.4,176.8 L155.0,177.9 L149.6,174.6 L147.5,169.3Z M388.9,120.0 L460.0,120.0 L460.0,142.1 L438.6,143.3 L429.4,145.6 L422.6,147.9 L419.1,151.3 L418.0,157.0 L415.7,159.3 L410.0,159.3 L404.3,157.0 L398.6,153.6 L395.1,149.0 L392.9,143.3 L390.6,137.6Z M262.9,258.3 L269.7,252.6 L276.6,250.3 L288.0,249.1 L289.1,252.6 L297.1,250.3 L304.0,251.4 L308.6,253.7 L315.4,257.1 L320.0,259.4 L326.9,261.7 L336.0,261.7 L345.1,262.9 L349.7,265.1 L350.9,270.9 L347.4,275.4 L338.3,276.6 L331.4,278.9 L330.3,285.7 L320.0,284.6 L308.6,284.6 L299.4,285.7 L290.3,282.3 L281.1,276.6 L274.3,272.0 L267.4,267.4 L264.0,262.9Z" fill="#82baf5" filter="url(#er8)"/>
<mask id="bm" maskUnits="userSpaceOnUse" x="0" y="0" width="700" height="473"><path d="M148.6,161.8 L153.9,158.1 L160.4,158.6 L162.5,161.8 L161.4,166.1 L167.9,163.9 L174.3,161.8 L182.9,160.3 L193.6,159.6 L202.1,162.9 L205.4,168.2 L204.3,173.6 L208.6,178.9 L212.9,182.1 L224.3,187.3 L234.6,192.4 L241.4,196.7 L248.3,199.3 L255.1,194.1 L262.0,190.7 L268.9,187.3 L275.7,184.7 L284.3,183.0 L292.9,182.1 L301.4,183.5 L312.1,185.7 L322.9,187.9 L335.7,192.1 L348.6,196.4 L359.3,200.7 L365.7,207.1 L367.9,212.5 L372.1,217.9 L376.4,224.3 L382.9,228.6 L387.1,235.0 L387.1,243.6 L382.9,250.0 L376.4,256.4 L370.0,258.6 L365.7,256.4 L361.4,252.1 L361.4,247.9 L365.7,239.3 L361.4,230.7 L355.0,225.4 L344.3,222.1 L333.6,218.9 L322.9,216.8 L312.1,215.7 L301.4,217.9 L292.9,222.1 L288.6,226.4 L286.0,228.8 L275.7,228.4 L267.1,226.7 L258.6,224.1 L250.0,221.6 L241.4,218.1 L231.1,216.4 L220.9,214.7 L210.6,211.3 L200.3,206.1 L190.0,201.9 L176.4,196.1 L170.0,192.9 L165.7,189.6 L167.9,185.4 L172.1,182.1 L171.1,177.9 L167.9,175.7 L161.4,176.8 L155.0,177.9 L149.6,174.6 L147.5,169.3Z M388.9,120.0 L460.0,120.0 L460.0,142.1 L438.6,143.3 L429.4,145.6 L422.6,147.9 L419.1,151.3 L418.0,157.0 L415.7,159.3 L410.0,159.3 L404.3,157.0 L398.6,153.6 L395.1,149.0 L392.9,143.3 L390.6,137.6Z M262.9,258.3 L269.7,252.6 L276.6,250.3 L288.0,249.1 L289.1,252.6 L297.1,250.3 L304.0,251.4 L308.6,253.7 L315.4,257.1 L320.0,259.4 L326.9,261.7 L336.0,261.7 L345.1,262.9 L349.7,265.1 L350.9,270.9 L347.4,275.4 L338.3,276.6 L331.4,278.9 L330.3,285.7 L320.0,284.6 L308.6,284.6 L299.4,285.7 L290.3,282.3 L281.1,276.6 L274.3,272.0 L267.4,267.4 L264.0,262.9Z M365.5,343.4 L373.1,338.3 L383.3,335.8 L390.9,329.4 L396.0,323.1 L388.4,318.0 L384.6,312.9 L390.9,305.3 L406.1,302.8 L421.4,299.0 L436.6,295.2 L443.5,292.6 L460.0,292.6 L460.0,334.5 L431.5,340.8 L418.8,348.5 L408.7,353.5 L396.0,357.3 L388.4,356.1 L380.8,361.1 L374.4,366.2 L370.6,361.1 L365.5,357.3 L364.3,351.0Z M332.5,373.8 L340.2,366.2 L350.3,364.9 L363.0,366.2 L373.1,368.8 L383.3,370.0 L393.5,372.6 L403.6,373.8 L413.8,373.8 L421.4,376.4 L425.2,381.4 L423.9,389.1 L416.3,394.1 L406.1,397.9 L393.5,400.5 L380.8,415.0 L330.0,415.0 L330.0,381.4Z M253.2,330.1 L260.3,326.1 L270.3,324.1 L280.4,326.1 L288.4,330.1 L290.4,336.1 L286.4,339.1 L278.3,340.2 L274.3,345.2 L274.3,356.2 L276.3,366.3 L278.3,374.3 L276.3,380.4 L270.3,384.4 L262.3,383.4 L254.2,380.4 L250.2,376.3 L254.2,366.3 L258.2,356.2 L260.3,348.2 L258.2,340.2 L254.2,334.1Z M304.5,415.0 L306.5,384.4 L312.5,379.3 L319.5,377.3 L322.6,382.4 L320.6,390.4 L318.5,398.4 L316.5,415.0Z" fill="#fff" filter="url(#er4)"/></mask>
<g mask="url(#bm)" filter="url(#bl)"><ellipse cx="190" cy="180" rx="14" ry="8" fill="#9cdcf4" transform="rotate(30 190 180)"/>
<ellipse cx="197" cy="185" rx="7" ry="5" fill="#c8eaa0" transform="rotate(40 197 185)"/>
<ellipse cx="166" cy="168" rx="4" ry="5" fill="#80b8ff"/>
<ellipse cx="305" cy="203" rx="28" ry="7" fill="#9ad8f4" transform="rotate(8 305 203)"/>
<ellipse cx="346" cy="208" rx="11" ry="5" fill="#c4e8a4" transform="rotate(20 346 208)"/>
<ellipse cx="296" cy="212" rx="8" ry="4" fill="#c0e6a8"/>
<ellipse cx="377" cy="240" rx="5" ry="10" fill="#90d0f8"/>
<ellipse cx="425" cy="137" rx="24" ry="5" fill="#aeeef2" transform="rotate(-10 425 137)"/>
<ellipse cx="402" cy="146" rx="8" ry="7" fill="#90c8f8"/>
<ellipse cx="297" cy="274" rx="15" ry="6" fill="#c4e8a4" transform="rotate(10 297 274)"/>
<ellipse cx="276" cy="257" rx="7" ry="4" fill="#a0e0f0"/>
<ellipse cx="340" cy="270" rx="7" ry="5" fill="#a0e0f0"/>
<ellipse cx="415" cy="322" rx="30" ry="9" fill="#a8ecdc" transform="rotate(-35 415 322)"/>
<ellipse cx="424" cy="318" rx="16" ry="6" fill="#cce4a0" transform="rotate(-35 424 318)"/>
<ellipse cx="380" cy="386" rx="42" ry="11" fill="#aceed4" transform="rotate(5 380 386)"/>
<ellipse cx="381" cy="389" rx="10" ry="6" fill="#d2dc92"/>
<ellipse cx="409" cy="384" rx="8" ry="5" fill="#cce2a0"/>
<ellipse cx="268" cy="337" rx="6" ry="7" fill="#e0a838"/>
<ellipse cx="266" cy="351" rx="5" ry="9" fill="#c8e890"/>
<ellipse cx="264" cy="368" rx="5" ry="8" fill="#a0e0f0"/>
<ellipse cx="314.5" cy="390" rx="4" ry="8" fill="#d8d480"/>
</g>
</g>
<g fill="none" stroke-width="1" stroke-linejoin="round" shape-rendering="crispEdges" clip-path="url(#rc)"><polygon points="63.6,141.6 67.4,144.1 67.1,148.4 63.6,150.2 59.8,147.9 59.8,144.1" stroke="#55cc22"/><polyline points="69.1,132.7 74.2,140.3 75.5,150.5 71.7,157.6 59.0,160.6" stroke="#cccc00"/><polyline points="78.0,132.7 81.8,142.8 82.3,155.5 78.0,164.4 69.1,167.7 59.0,168.2" stroke="#ddbb00"/><polyline points="86.9,132.7 90.7,145.4 92.5,158.1 89.5,170.8 80.6,175.8 59.0,177.1" stroke="#dd9900"/><polyline points="100.9,132.7 102.1,147.9 100.9,165.7 92.0,180.9 84.4,188.5 80.6,198.7 81.8,207.1" stroke="#cc8800"/><polyline points="117.4,132.7 116.1,153.0 114.8,168.2 117.4,188.5 117.4,207.1" stroke="#dd8800"/><polyline points="126.3,134.0 126.3,158.1 127.5,183.4 130.1,207.1" stroke="#ddaa00"/><polyline points="135.1,151.7 136.4,163.1 138.9,178.4 142.8,193.6 145.3,207.1" stroke="#aacc00"/><polyline points="169.4,132.7 171.9,139.0 176.0,142.3" stroke="#dd9900"/><polyline points="135.1,151.7 147.8,153.5 158.0,153.5 168.1,152.5 176.0,154.3" stroke="#ccaa00"/><polyline points="176.0,144.1 186.2,146.6 196.3,145.4 206.5,140.3 216.6,132.7" stroke="#dd9900"/><polyline points="176.0,158.1 188.7,160.6 201.4,159.3 214.1,156.8 224.2,150.5 231.8,139.0 234.4,132.7" stroke="#ddaa00"/><polyline points="178.5,180.9 191.2,191.1 203.9,193.6 210.3,188.5 207.7,178.4" stroke="#99cc00"/><polyline points="326.0,252.7 341.2,250.1 361.5,248.9 374.2,242.5 384.4,234.9 397.1,224.8 409.8,218.4 427.5,213.3 445.3,210.8" stroke="#22bbcc"/><polyline points="371.7,260.3 384.4,247.6 399.6,234.9 414.8,226.0 432.6,218.4 445.3,215.9" stroke="#22ccbb"/><polyline points="359.0,273.0 379.3,262.8 392.0,250.1 407.2,237.5 422.4,229.8 437.7,224.8 445.3,222.7" stroke="#44cc99"/><polyline points="336.2,318.7 346.3,306.0 359.0,290.8 371.7,275.5 386.9,262.8 402.1,250.1 419.9,240.0 437.7,233.6 445.3,232.4" stroke="#66cc44"/><polyline points="326.0,313.6 336.2,321.2 341.2,327.1" stroke="#44cc44"/><polygon points="394.5,278.1 402.1,270.5 409.8,270.5 411.0,275.5 404.7,285.7 397.1,292.0 393.3,288.2" stroke="#88cc22"/><polyline points="445.3,256.5 437.7,257.8 433.9,267.9 435.1,278.1 442.8,285.7 445.3,293.3" stroke="#99cc00"/><polyline points="402.1,327.1 422.4,313.6 445.3,293.3" stroke="#aacc00"/><polyline points="326.0,222.2 341.2,224.8 351.4,232.4 359.0,237.5" stroke="#22aacc"/><polyline points="409.8,357.5 412.3,365.1 417.4,375.2 445.3,376.5" stroke="#bbbb00"/><polyline points="404.7,352.4 409.8,344.8 417.4,337.2 432.6,329.5" stroke="#bbbb00"/><polyline points="445.3,349.8 444.0,352.4 445.3,354.4" stroke="#dd9900"/><polyline points="267.1,326.3 275.7,323.7 287.7,322.0 292.0,321.5" stroke="#66cc22"/><polyline points="310.0,322.0 322.0,325.4 332.3,327.1 339.1,331.4 342.3,340.0" stroke="#66cc22"/><polyline points="255.1,324.6 267.1,316.0 284.3,312.6 301.4,307.4 310.0,302.3 318.6,299.7 323.7,304.0 327.1,314.3 332.3,322.9 340.9,325.4 346.0,319.4 352.9,307.4 361.4,297.1 370.0,290.3" stroke="#22cc99"/><polyline points="253.4,328.0 270.6,310.9 292.9,298.9 310.0,290.3 322.0,285.1" stroke="#22bbcc"/><polyline points="380.0,220.2 394.0,210.9 407.9,201.6 417.2,194.7 426.5,190.0 440.0,184.0 448.0,182.0" stroke="#22bbcc"/><polyline points="384.7,250.5 400.9,231.9 417.2,220.2 445.1,214.4" stroke="#22ccdd"/><polyline points="137.0,188.0 150.0,191.0 160.0,187.0 171.0,182.0 176.0,190.0 180.0,197.0 191.0,201.0 205.0,203.0 220.0,201.0" stroke="#66cc22"/><polyline points="248.4,215.0 250.5,227.7 246.3,242.5 227.3,245.7 206.1,242.5 187.1,231.9 176.5,225.6 163.8,227.7 160.7,240.4 161.7,267.9 166.0,300.0 166.9,333.3 158.0,351.0 140.3,366.5 120.3,373.2 98.1,368.8 73.7,377.6 58.2,386.5" stroke="#22ccaa"/><polyline points="260.0,257.3 235.7,253.1 210.3,250.9 193.4,242.5 178.6,235.1 168.1,236.1 167.0,257.3 168.1,278.4 170.2,284.6 171.4,300.0 169.1,317.7 169.1,333.3 173.6,355.5 171.4,366.5 155.8,377.6 135.9,388.7 122.5,394.3 109.2,383.2 100.4,381.0 91.5,386.5 90.4,404.0" stroke="#22ccbb"/><polyline points="260.0,263.6 239.9,260.5 218.8,259.4 199.8,253.1 180.7,250.9 173.3,261.5 172.3,282.7 176.5,288.8 175.8,300.0 173.6,313.3 175.8,333.3 184.7,344.4 195.0,352.0" stroke="#22ccdd"/><polyline points="260.0,272.1 248.4,270.0 225.1,265.7 204.0,263.6 182.9,263.6 175.5,274.2 175.5,295.3 185.0,315.0" stroke="#22bbdd"/><polyline points="260.0,280.5 235.7,274.2 214.6,271.0 193.4,274.2 191.3,284.8 193.4,299.6 204.0,315.0" stroke="#22aadd"/><polygon points="212.5,284.8 220.9,278.4 239.9,282.7 249.5,284.8 242.1,299.6 229.4,310.1 218.8,309.1 212.5,295.3" stroke="#22aadd"/><polyline points="275.4,215.0 279.6,227.7 281.7,238.3 285.9,242.5 300.7,236.1 319.8,235.1 338.8,237.2 355.7,236.1 368.4,231.9 380.0,227.7" stroke="#22bbdd"/><polyline points="250.0,260.5 262.7,259.4 277.5,264.7 292.3,263.6 309.2,260.5 324.0,262.6 343.0,260.5 364.2,258.3 380.0,257.3" stroke="#22bbcc"/><polyline points="250.0,271.0 258.5,270.0 271.1,276.3 283.8,280.5 302.9,282.7 317.7,284.8 330.3,282.7 340.9,278.4 347.3,284.8 351.5,291.1 355.7,289.0 359.9,276.3 368.4,265.7 380.0,259.4" stroke="#22aadd"/><polyline points="250.0,276.3 262.7,274.2 273.3,280.5 277.5,291.1 283.8,297.5 296.5,299.6 311.3,298.5 319.8,299.6 330.3,308.0 334.6,315.0" stroke="#22aacc"/><polyline points="250.0,284.8 258.5,280.5 266.9,286.9 271.1,299.6 279.6,308.0 292.3,312.3 302.9,315.0" stroke="#22aacc"/><polyline points="250.0,295.3 256.3,289.0 262.7,295.3 264.8,305.9 271.1,315.0" stroke="#22aacc"/><polyline points="285.9,315.0 302.9,303.8 317.7,299.6 326.1,303.8 330.3,315.0" stroke="#44cc66"/><polyline points="81.4,200.0 83.5,210.6 79.3,214.8 68.7,216.9 58.1,221.1" stroke="#cc8800"/><polyline points="58.1,240.2 72.9,234.9 87.7,228.5 102.5,224.3 108.9,227.5 109.9,233.8 104.6,250.7 100.4,263.4 91.9,268.7 77.1,274.0 58.1,282.5" stroke="#dd8800"/><polyline points="117.3,200.0 119.4,221.1 121.5,248.6 119.4,269.8 111.0,284.6 95.9,303.3 78.2,307.8 58.2,312.2" stroke="#dd9900"/><polyline points="125.8,200.0 127.9,221.1 130.0,231.7 131.1,248.6 130.0,263.4 125.8,284.6 120.3,306.0 100.4,318.0 78.2,323.3 58.2,325.5" stroke="#ddaa00"/><polyline points="135.3,200.0 138.5,221.1 140.6,252.9 138.5,274.0 135.0,300.0 128.0,322.0 120.3,327.7 100.4,332.2 78.2,335.5 58.2,337.7" stroke="#cccc00"/><polyline points="142.7,200.0 146.9,216.9 149.0,231.7 145.9,263.4 144.8,284.6 142.5,306.7 135.9,325.0 127.0,339.9 100.4,344.4 78.2,348.8 58.2,352.1" stroke="#aacc00"/><polyline points="165.9,202.1 159.6,216.9 155.4,242.3 157.5,263.4 160.0,300.0 158.0,322.2 144.7,339.9 124.8,354.3 91.5,357.7 73.7,364.3 58.2,366.5" stroke="#66cc22"/><polyline points="214.1,290.0 216.5,304.6 226.2,310.7 238.4,308.2 244.5,298.5 246.9,290.0" stroke="#22bbdd"/><polyline points="194.6,290.0 201.9,307.0 214.1,321.6 228.7,328.9 240.8,330.1 248.1,321.6 250.6,304.6 253.0,290.0" stroke="#22bbdd"/><polyline points="180.0,299.7 194.6,316.8 209.2,333.8 228.7,346.0 243.3,350.8 251.8,343.5 253.0,326.5 257.9,304.6 260.3,290.0" stroke="#22bbdd"/><polyline points="180.0,316.8 194.6,331.4 211.6,346.0 228.7,360.6 240.8,365.4 253.0,363.0 255.4,350.8 257.9,326.5 262.7,304.6 267.6,290.0" stroke="#22aadd"/><polyline points="180.0,333.8 199.5,348.4 216.5,363.0 233.5,375.2 248.1,384.9 257.9,382.5 260.3,367.9 262.7,338.7 270.0,314.3 277.3,290.0" stroke="#22aacc"/><polyline points="180.0,346.0 204.3,363.0 223.8,382.5 243.3,394.6 257.9,397.1 265.2,387.3 267.6,363.0 272.5,333.8 282.2,309.5 291.9,290.0" stroke="#22aacc"/><polyline points="219.1,146.6 230.0,145.8 243.5,144.9 255.4,150.0 267.2,155.1 280.8,159.3 294.3,158.5 307.8,153.4 323.1,144.1 340.0,133.1 344.8,133.1 354.9,138.2 365.1,139.8 373.5,136.5 378.6,132.2" stroke="#bbbb00"/><polyline points="176.0,170.8 191.2,174.6 206.5,169.0 220.0,167.0 230.0,168.6 243.5,171.2 257.1,167.8 272.3,164.4 285.8,163.5 301.1,161.8 314.6,155.1 328.2,144.9 340.0,138.2 348.2,144.9 360.0,146.6 371.8,144.9 382.0,139.8 388.8,134.8 393.8,131.4" stroke="#99cc00"/><polyline points="205.0,200.0 218.0,192.0 230.0,188.1 246.9,182.2 263.8,175.4 280.8,171.2 297.7,168.6 311.2,166.1 324.8,156.8 340.0,146.6 348.2,150.8 360.0,153.4 371.8,151.7 383.7,146.6 392.2,141.5 397.2,134.8 402.3,131.4" stroke="#66cc22"/><polyline points="241.8,199.1 255.4,190.6 272.3,182.2 289.2,176.2 306.2,173.7 321.4,168.6 331.5,158.5 340.0,153.4 351.5,157.6 363.4,159.3 376.9,156.8 388.8,151.7 395.5,146.6 400.6,138.2 404.0,132.2" stroke="#44cc88"/><polyline points="263.8,192.3 280.8,182.2 297.7,177.1 314.6,175.4 328.2,168.6 340.0,161.8 351.5,164.4 366.8,166.1 380.3,163.5 392.2,158.5 400.6,151.7 405.7,143.2 409.1,133.1" stroke="#22ccaa"/><polyline points="272.3,192.3 289.2,182.2 304.5,179.6 319.7,177.1 331.5,172.0 340.0,166.9 351.5,170.3 366.8,172.8 382.0,170.3 393.8,165.2 402.3,158.5 409.1,148.3 412.5,134.8" stroke="#22ccbb"/><polyline points="284.2,188.9 301.1,183.8 318.0,182.2 331.5,178.8 340.0,175.4 354.9,177.1 371.8,177.9 388.8,175.4 398.9,170.3 407.4,161.8 414.2,153.4 417.5,141.5 419.2,133.1" stroke="#22ccdd"/><polyline points="290.9,192.3 307.8,187.2 324.8,185.5 340.0,182.2 354.9,182.2 375.2,183.8 393.8,182.2 405.7,177.1 415.8,170.3 419.2,161.8 417.5,155.1 422.6,148.3 432.8,144.9 448.0,144.1" stroke="#22bbdd"/><polyline points="301.1,195.7 318.0,192.3 340.0,187.2 354.9,187.2 371.8,188.9 388.8,190.6 405.7,183.8 419.2,177.1 426.0,170.3 424.3,158.5 429.4,151.7 439.5,150.0 448.0,151.7" stroke="#22bbdd"/><polyline points="359.5,133.1 366.8,133.1" stroke="#dd9900"/><polyline points="285.8,151.7 297.7,147.5 311.2,141.5 321.4,132.2" stroke="#ddaa00"/><polyline points="426.0,146.6 427.7,155.1 434.5,158.5 448.0,157.6" stroke="#22aadd"/></g>
<g fill="none" stroke-width="1" stroke-linejoin="round" shape-rendering="crispEdges" clip-path="url(#mc)"><polyline points="42.5,88.3 43.8,91.6 50.1,94.6 51.4,98.4 55.2,101.0 51.4,104.8 47.6,108.6 38.7,111.1 33.6,109.8 28.5,110.4 27.3,112.4 36.2,113.1 43.8,112.4 52.6,109.8 62.8,107.3 69.1,105.3 73.0,103.5 70.4,101.0 76.8,98.4 83.1,94.6 86.9,94.1 80.6,98.4 76.8,104.8 81.8,104.3 92.0,98.4 99.6,102.2 104.7,109.8 111.0,112.4 117.4,117.5 119.9,122.5 123.7,130.1 127.5,134.0 130.1,137.8 132.6,145.4 133.9,153.0 137.7,158.1 138.9,168.2 141.5,178.4 145.3,188.5 150.4,196.1 155.4,203.8 158.0,207.1" stroke="#22cc22"/><polyline points="127.5,132.7 128.8,140.3 127.5,147.9 131.3,154.3 132.6,163.1 133.9,173.3 137.7,183.4 142.8,193.6 147.8,201.2 151.6,207.1" stroke="#22cc22"/><polygon points="60.3,111.1 70.4,109.3 71.7,112.4 64.1,116.2 60.3,114.9" stroke="#22cc22"/><polygon points="184.9,90.8 192.5,88.3 201.4,89.0 197.6,93.3 191.2,97.2 186.2,95.9" stroke="#22cc22"/><polygon points="200.1,128.9 206.5,122.5 207.7,119.5 214.1,120.0 220.4,118.0 228.0,119.5 219.1,122.5 211.5,125.1 203.9,128.1" stroke="#22cc22"/><polyline points="318.1,88.3 305.4,92.1 308.0,99.7 304.2,104.8 295.3,112.4 292.8,120.0 285.1,122.5 282.6,128.9 277.5,137.8 276.3,145.4 282.6,151.7 285.1,160.6 287.7,163.1 302.9,168.2 313.1,174.6 326.0,178.4" stroke="#22cc22"/><polyline points="305.4,92.1 310.5,90.8 314.3,97.2 318.1,99.7 323.2,109.8 326.0,112.4" stroke="#22cc22"/><polyline points="304.2,112.4 310.5,114.9 314.3,111.1 320.7,113.6 326.0,116.2" stroke="#22cc22"/><polygon points="316.1,123.8 319.4,122.0 321.9,122.5 320.2,125.1" stroke="#22cc22"/><polygon points="249.6,154.3 252.1,160.6 249.6,165.7 247.1,163.1" stroke="#22cc22"/><polyline points="217.9,144.1 221.7,141.6 228.0,144.1 230.6,147.9 224.2,147.9 219.1,149.2" stroke="#22cc22"/><polyline points="226.8,207.1 229.3,191.1 236.9,187.3 247.1,188.5 252.1,191.1 257.2,188.5 262.3,193.6 267.4,198.7 272.4,203.8 272.4,207.1" stroke="#22cc22"/><polyline points="242.0,207.1 249.6,196.1 254.7,192.3 259.8,198.7 257.2,207.1" stroke="#22cc22"/><polyline points="345.0,88.3 343.8,94.6 336.2,98.4 332.3,104.8 336.2,107.3 343.8,103.5 351.4,109.8 359.0,112.4 366.6,114.9 375.5,116.2 380.6,112.4 376.8,106.0 370.4,102.2 366.6,106.0 361.5,102.2 364.1,97.2 369.1,92.1 376.8,89.5 380.6,88.3" stroke="#22cc22"/><polyline points="367.9,88.3 371.7,93.3 379.3,99.7 381.8,107.3" stroke="#22cc22"/><polyline points="422.4,88.3 427.5,94.6 435.1,101.0 445.3,106.0 458.0,107.3 459.2,99.7 455.4,92.1 452.9,88.3" stroke="#22cc22"/><polygon points="329.8,122.5 332.3,123.8 331.1,127.1 329.0,125.6" stroke="#22cc22"/><polyline points="326.0,121.3 338.7,118.7 351.4,118.7 359.0,123.8 364.1,127.6 369.1,131.4 376.8,134.0 384.4,128.9 389.5,136.5 397.1,145.4 404.7,153.0 413.6,156.8 419.9,160.6 427.5,165.7 432.6,175.8 437.7,186.0 445.3,191.1 447.8,198.7 450.4,207.1" stroke="#22cc22"/><polyline points="337.4,121.3 338.7,127.6 337.4,134.0 340.0,141.6 341.2,149.2 345.0,155.5 341.2,163.1 336.2,170.8 331.1,175.8 328.5,183.4 332.3,191.1 338.7,198.7 336.2,203.8" stroke="#22cc22"/><polyline points="402.1,198.7 412.3,194.9 422.4,198.7 432.6,193.6 440.2,188.5 447.8,191.1 452.9,198.7 447.8,207.1" stroke="#22cc22"/><polyline points="176.0,208.3 201.4,209.5 214.1,215.9 224.2,217.2 229.3,212.1 230.6,207.0" stroke="#22cc22"/><polyline points="295.3,224.8 302.9,219.7 313.1,218.4 320.7,222.2 323.2,232.4 318.1,242.5 313.1,250.1 318.1,257.8 326.0,262.8" stroke="#22cc22"/><polyline points="295.3,227.3 300.4,232.4 308.0,229.8 310.5,237.5 309.2,245.1 313.1,255.2" stroke="#22cc22"/><polyline points="176.0,316.1 183.6,313.6 187.4,318.7 186.2,327.1" stroke="#22cc22"/><polyline points="329.8,257.8 341.2,254.0 351.4,250.1 359.0,245.1 348.8,247.6 336.2,252.7 329.8,257.8" stroke="#22cc22"/><polyline points="326.0,237.5 336.2,234.9 341.2,240.0 343.8,246.3 336.2,245.1 328.5,242.5" stroke="#22cc22"/><polyline points="384.4,207.0 389.5,214.6 399.6,212.1 409.8,214.6 417.4,219.7 422.4,214.6 425.0,212.1" stroke="#22cc22"/><polyline points="376.8,257.8 381.8,245.1 386.9,234.9 392.0,227.3 402.1,222.2 409.8,217.2 422.4,217.2 425.0,212.1" stroke="#22cc22"/><polyline points="369.1,260.3 371.7,265.4 364.1,270.5 366.6,278.1 364.1,288.2 366.6,293.3 361.5,297.1" stroke="#22cc22"/><polyline points="176.0,334.6 183.6,337.2 191.2,347.3 196.3,354.9 201.4,362.5 206.5,370.1 216.6,377.8 221.7,385.4 229.3,390.5 239.5,398.1 249.6,403.1 262.3,405.7 277.5,409.5 290.2,414.6 302.9,413.3 315.6,408.2 326.0,403.1" stroke="#22cc22"/><polyline points="178.5,327.0 183.6,332.1 193.8,342.2 198.8,349.8 206.5,357.5 211.5,365.1 209.0,372.7 203.9,372.7 198.8,357.5" stroke="#22cc22"/><polyline points="262.3,327.0 263.6,342.2 264.8,360.0 267.4,372.7 277.5,380.3 287.7,387.9 297.8,393.0 302.9,387.9 305.4,380.3 313.1,377.8 318.1,380.3 321.9,385.4 318.1,395.5 326.0,400.6" stroke="#22cc22"/><polyline points="275.0,339.7 280.1,352.4 287.7,367.6 302.9,377.8 308.0,380.3" stroke="#22cc22"/><polyline points="287.7,327.0 302.9,329.5 308.0,332.1 315.6,334.6 326.0,332.1" stroke="#22cc22"/><polyline points="326.0,328.3 336.2,329.5 341.2,337.2 346.3,342.2 351.4,347.3 353.9,352.4" stroke="#22cc22"/><polyline points="333.6,327.0 341.2,334.6 351.4,339.7" stroke="#22cc22"/><polyline points="331.1,374.0 341.2,368.9 351.4,367.6 361.5,368.9 371.7,371.4 381.8,372.7 392.0,377.8 402.1,381.6 412.3,382.8 422.4,380.3 417.4,385.4 407.2,387.9 397.1,386.6 386.9,382.8 376.8,380.3 366.6,379.0 356.5,377.8 346.3,376.5 338.7,376.5" stroke="#22cc22"/><polyline points="376.8,377.8 384.4,381.6 392.0,387.9 402.1,389.2 412.3,387.9 422.4,382.8" stroke="#22cc22"/><polyline points="326.0,381.6 346.3,384.1 366.6,387.9 384.4,391.7 402.1,394.3 422.4,391.7 432.6,393.0 442.8,400.6" stroke="#22cc22"/><polyline points="395.8,327.0 389.5,334.6 386.9,342.2 386.9,352.4 384.4,360.0 376.8,367.6 371.7,371.4" stroke="#22cc22"/><polyline points="326.0,408.2 336.2,410.8 342.5,415.8 341.2,428.5 336.2,436.1 338.7,443.8 341.2,447.1" stroke="#22cc22"/><polyline points="376.8,428.5 392.0,431.1 402.1,426.0 412.3,420.9 422.4,426.0 435.1,424.7 445.3,426.0 458.0,422.2 468.1,419.6 476.0,420.9" stroke="#22cc22"/><polyline points="409.8,428.5 413.6,436.1 417.4,438.7 419.9,433.6" stroke="#22cc22"/><polygon points="430.1,380.3 435.1,379.0 437.7,380.8 432.6,382.3" stroke="#22cc22"/><polyline points="342.6,340.0 346.0,322.9 356.3,305.7 370.0,290.3" stroke="#22cc22"/><polyline points="349.4,340.0 356.3,322.9 366.6,305.7 370.0,297.1" stroke="#22cc22"/><polyline points="394.0,190.0 391.6,199.3 382.3,213.3 380.0,220.2" stroke="#22cc22"/><polygon points="403.3,213.3 410.2,215.6 421.9,210.9 424.2,220.2 414.9,227.2 405.6,231.9 403.3,227.2" stroke="#22cc22"/><polyline points="426.5,190.0 428.8,199.3 440.5,204.0 449.8,199.3 452.1,190.0" stroke="#22cc22"/><polyline points="129.0,132.6 132.9,140.2 134.8,149.8 140.5,159.3 142.4,174.5 144.3,182.1 142.4,191.7 148.1,201.2 153.8,215.0" stroke="#22cc22"/><polyline points="133.8,151.7 138.6,159.3 140.5,168.8 146.2,180.2 151.9,187.9 155.7,197.4 159.5,215.0" stroke="#22cc22"/><polyline points="170.2,305.0 172.3,317.7 180.7,332.5 191.3,343.1 201.9,349.4 206.1,357.9 214.6,364.2 220.9,374.8 223.0,389.6 231.5,398.0 239.9,405.0" stroke="#22cc22"/><polyline points="180.7,313.5 187.1,315.6 189.2,326.1 193.4,336.7 199.8,343.1 204.0,347.3 199.8,353.6 195.5,347.3 187.1,338.8 180.7,330.4 176.5,321.9" stroke="#22cc22"/><polyline points="151.1,200.0 155.4,210.6 152.2,221.1 149.0,242.3 146.9,263.4 151.1,284.6 155.4,300.0 166.9,315.0 175.8,333.0 186.0,344.4" stroke="#22cc22"/><polyline points="155.4,200.0 159.6,212.7 155.4,231.7 152.2,252.9 153.3,274.0 159.6,300.0 170.0,320.0 180.2,333.3 190.0,350.0" stroke="#22cc22"/></g>
<g font-family="Liberation Mono" font-size="8.5" letter-spacing="0.5" text-anchor="middle" dominant-baseline="middle"><text x="107.7" y="241.3" fill="#dd8800" transform="rotate(-90 107.7 241.3)">1028</text><text x="131.3" y="242.5" fill="#ddaa00" transform="rotate(-90 131.3 242.5)">1032</text><text x="195.0" y="237.5" fill="#22ccbb" transform="rotate(20 195.0 237.5)">1010</text><text x="272.4" y="233.6" fill="#22bbdd" transform="rotate(70 272.4 233.6)">1008</text><text x="219.1" y="342.7" fill="#22bbdd" transform="rotate(0 219.1 342.7)">1002</text><text x="249.6" y="349.8" fill="#22bbdd" transform="rotate(90 249.6 349.8)">1008</text><text x="407.2" y="346.0" fill="#bbbb00" transform="rotate(-70 407.2 346.0)">1016</text><text x="152.9" y="167.1" fill="#bbbb00" transform="rotate(-60 152.9 167.1)">1016</text><text x="192.0" y="204.2" fill="#66cc22" transform="rotate(20 192.0 204.2)">1014</text><text x="301.0" y="321.0" fill="#66cc22" transform="rotate(8 301.0 321.0)">1014</text></g>
<rect x="56.5" y="130.5" width="391" height="274" fill="none" stroke="#fff" stroke-width="1"/>
<text x="250.6" y="430" fill="#eeee00" font-family="Liberation Mono" font-size="10.62" text-anchor="middle">PRECIP - Color-Filled Contour Plan View 1998-06-30 00:00:00Z</text>
<text x="250.6" y="439.3" fill="#eeaa00" font-family="Liberation Mono" font-size="10.62" text-anchor="middle">Psl_et - Contour Plan View 1998-06-30 00:00:00Z</text>
</svg>

<!-- splitter -->
<div class="a" style="left:484px;top:68px;width:4px;height:381px;background-image:radial-gradient(circle at 1.5px 1.5px,#9aa2b0 0.6px,transparent 0.9px),radial-gradient(circle at 3.5px 3.5px,#9aa2b0 0.6px,transparent 0.9px);background-size:4px 4px"></div>
<div class="a" style="left:489px;top:59px;width:1.5px;height:391px;background:#8e9aac"></div>
<svg style="left:0;top:0" width="700" height="90" viewBox="0 0 700 90">
<rect x="483" y="61" width="5" height="19" fill="#edede9"/>
<path d="M483,65.5 L487.2,62 L487.2,69Z" fill="#3a6ad0" stroke="#27457a" stroke-width="0.5"/>
<path d="M487.8,75 L483.2,71.8 L483.2,78.4Z" fill="#3a6ad0" stroke="#27457a" stroke-width="0.5"/>
</svg>


<!-- legend -->
<div class="a" style="left:490px;top:59px;width:1px;height:391px;background:#9aa3b0"></div>
<div class="a" style="left:695px;top:59px;width:1px;height:391px;background:#9aa3b0"></div>
<div class="a" style="left:490px;top:449px;width:206px;height:1px;background:#9aa3b0"></div>
<div class="t" style="left:562.5px;top:62px;font-size:13px;font-weight:bold;letter-spacing:0.45px">Legend</div>
<div class="a" style="left:492px;top:77px;width:202px;height:2px;background:#111"></div>
<svg style="left:0;top:0" width="700" height="240" viewBox="0 0 700 240">
<defs>
<g id="tog"><rect x="0.5" y="0.5" width="7" height="7" fill="#f6eeb8" stroke="#333" stroke-width="1"/><path d="M2,4 L6,4" stroke="#222" stroke-width="1.2"/></g>
<g id="chk"><rect x="0.5" y="0.5" width="10" height="10" fill="#dae6f6" stroke="#8898b0" stroke-width="1"/><path d="M2.5,5.5 L4.2,8.3 L8.5,2.8" fill="none" stroke="#111" stroke-width="1.5"/></g>
<g id="lock"><path d="M2.8,7.5 L2.8,5 A3.6,3.6 0 0 1 10,5 L10,7.5" fill="none" stroke="#9a9a9a" stroke-width="1.8"/><rect x="0.8" y="6.8" width="11.5" height="7" fill="#f4c860" stroke="#e0a040" stroke-width="0.6"/><rect x="0.8" y="12.6" width="11.5" height="1.3" fill="#e88a10"/><path d="M3.5,9 L5,9 M7.5,9 L9.5,9 M3,11 L10,11" stroke="#d8a030" stroke-width="0.8"/></g>
<g id="unlock"><path d="M2.5,7.5 L2.5,4.5 A2.8,2.8 0 0 1 8,3.8" fill="none" stroke="#9a9a9a" stroke-width="1.8"/><rect x="0.8" y="6.8" width="11.5" height="7" fill="#f4c860" stroke="#e0a040" stroke-width="0.6"/><rect x="0.8" y="12.6" width="11.5" height="1.3" fill="#e88a10"/><path d="M3.5,9 L5,9 M7.5,9 L9.5,9 M3,11 L10,11" stroke="#d8a030" stroke-width="0.8"/></g>
<g id="trash"><rect x="0.8" y="1.2" width="8.6" height="11.3" rx="2.2" fill="#e2e2e0" stroke="#6e6e6c" stroke-width="1"/><ellipse cx="5.1" cy="2.6" rx="3.2" ry="1.3" fill="#fafafa" stroke="#555" stroke-width="0.8"/><rect x="3" y="5" width="4.2" height="6" fill="#d0d0ce"/></g>
<linearGradient id="pg" x1="0" x2="1">
<stop offset="0" stop-color="#0000ee"/><stop offset="0.034" stop-color="#0000ee"/>
<stop offset="0.034" stop-color="#3344ff"/><stop offset="0.061" stop-color="#3344ff"/>
<stop offset="0.061" stop-color="#5566ff"/><stop offset="0.088" stop-color="#5566ff"/>
<stop offset="0.088" stop-color="#6699ff"/><stop offset="0.116" stop-color="#6699ff"/>
<stop offset="0.116" stop-color="#77bbff"/><stop offset="0.143" stop-color="#77bbff"/>
<stop offset="0.143" stop-color="#88ddff"/><stop offset="0.170" stop-color="#88ddff"/>
<stop offset="0.170" stop-color="#99ffee"/><stop offset="0.204" stop-color="#99ffee"/>
<stop offset="0.204" stop-color="#99eedd"/><stop offset="0.231" stop-color="#99eedd"/>
<stop offset="0.231" stop-color="#99eecc"/><stop offset="0.286" stop-color="#99eecc"/>
<stop offset="0.286" stop-color="#99dd99"/><stop offset="0.333" stop-color="#99dd99"/>
<stop offset="0.333" stop-color="#99dd77"/><stop offset="0.388" stop-color="#99dd77"/>
<stop offset="0.388" stop-color="#aacc55"/><stop offset="0.435" stop-color="#aacc55"/>
<stop offset="0.435" stop-color="#aabb22"/><stop offset="0.544" stop-color="#aabb22"/>
<stop offset="0.544" stop-color="#bbaa00"/><stop offset="0.605" stop-color="#bbaa00"/>
<stop offset="0.605" stop-color="#ccaa00"/><stop offset="0.673" stop-color="#ccaa00"/>
<stop offset="0.673" stop-color="#bb9900"/><stop offset="0.714" stop-color="#bb9900"/>
<stop offset="0.714" stop-color="#dd8800"/><stop offset="0.789" stop-color="#dd8800"/>
<stop offset="0.789" stop-color="#ee8800"/><stop offset="0.864" stop-color="#ee8800"/>
<stop offset="0.864" stop-color="#ee7700"/><stop offset="0.912" stop-color="#ee7700"/>
<stop offset="0.912" stop-color="#ff6600"/><stop offset="1" stop-color="#ff6600"/>
</linearGradient>
<linearGradient id="sg" x1="0" x2="1">
<stop offset="0" stop-color="#ee22ee"/><stop offset="0.027" stop-color="#ee22ee"/>
<stop offset="0.027" stop-color="#bb00dd"/><stop offset="0.054" stop-color="#bb00dd"/>
<stop offset="0.054" stop-color="#8800ee"/><stop offset="0.102" stop-color="#8800ee"/>
<stop offset="0.102" stop-color="#2200ee"/><stop offset="0.190" stop-color="#2200ee"/>
<stop offset="0.190" stop-color="#0022ff"/><stop offset="0.252" stop-color="#0022ff"/>
<stop offset="0.252" stop-color="#2244ff"/><stop offset="0.286" stop-color="#2244ff"/>
<stop offset="0.286" stop-color="#4466ff"/><stop offset="0.354" stop-color="#4466ff"/>
<stop offset="0.354" stop-color="#5588ff"/><stop offset="0.395" stop-color="#5588ff"/>
<stop offset="0.395" stop-color="#3399ee"/><stop offset="0.435" stop-color="#3399ee"/>
<stop offset="0.435" stop-color="#44bbff"/><stop offset="0.490" stop-color="#44bbff"/>
<stop offset="0.490" stop-color="#00ccff"/><stop offset="0.592" stop-color="#00ddee"/>
<stop offset="0.592" stop-color="#00ff00"/><stop offset="0.619" stop-color="#00ff00"/>
<stop offset="0.619" stop-color="#99ff00"/><stop offset="0.646" stop-color="#99ff00"/>
<stop offset="0.646" stop-color="#ffff00"/><stop offset="0.673" stop-color="#ffff00"/>
<stop offset="0.673" stop-color="#ffdd00"/><stop offset="0.714" stop-color="#ffdd00"/>
<stop offset="0.714" stop-color="#ffaa00"/><stop offset="0.741" stop-color="#ffaa00"/>
<stop offset="0.741" stop-color="#ff6600"/><stop offset="0.782" stop-color="#ff6600"/>
<stop offset="0.782" stop-color="#ff2200"/><stop offset="0.925" stop-color="#ff2200"/>
<stop offset="0.925" stop-color="#ff2266"/><stop offset="0.959" stop-color="#ff2266"/>
<stop offset="0.959" stop-color="#ff44ee"/><stop offset="1" stop-color="#ff44ee"/>
</linearGradient>
</defs>
<!-- window icon -->
<rect x="681.5" y="62.5" width="12" height="10.5" rx="1" fill="#f2f4fa" stroke="#6a8ad0" stroke-width="1"/>
<rect x="682" y="63" width="11" height="2" fill="#9ab8ea"/>
<path d="M688,71.5 L691,68.5 L694,71.5 L692.2,71.5 L692.2,74 L689.8,74 L689.8,71.5Z" fill="#3aa83a"/>
<!-- Maps row -->
<use href="#tog" x="494" y="81"/>
<use href="#chk" x="505" y="79.5"/>
<rect x="492" y="91" width="202" height="1.5" fill="#222"/>
<!-- DBM -->
<use href="#tog" x="497" y="99"/>
<use href="#chk" x="508" y="97.5"/>
<use href="#lock" x="665" y="94.5"/>
<use href="#trash" x="683.5" y="95.5"/>
<rect x="492" y="126" width="202" height="1.5" fill="#222"/>
<!-- Plan views -->
<use href="#tog" x="494" y="130"/>
<use href="#chk" x="505" y="128.5"/>
<rect x="492" y="139.5" width="202" height="1.5" fill="#222"/>
<!-- PRECIP -->
<use href="#tog" x="497" y="147"/>
<use href="#chk" x="508" y="146"/>
<use href="#unlock" x="665" y="143.5"/>
<use href="#trash" x="683.5" y="144.5"/>
<rect x="498" y="160" width="147" height="12.7" fill="url(#pg)"/>
<rect x="492" y="187.5" width="202" height="1" fill="#777"/>
<!-- PSL -->
<use href="#tog" x="497" y="193"/>
<use href="#chk" x="507.5" y="191"/>
<use href="#unlock" x="665" y="189"/>
<use href="#trash" x="683.5" y="190.5"/>
<rect x="498" y="205.5" width="147" height="11.8" fill="url(#sg)"/>
</svg>
<div class="t" style="left:523px;top:79.5px;font-size:11px;-webkit-text-stroke:0.35px #222">Maps</div>
<div class="t" style="left:525px;top:97px;font-size:11px;font-weight:bold;color:#2858f0;text-decoration:underline;text-underline-offset:0.5px">Default Background Maps</div>
<div class="t" style="left:498.5px;top:112.6px;font-size:8.7px;font-weight:bold;color:#111">World Coastlines</div>
<div class="t" style="left:523.5px;top:128.5px;font-size:11px;-webkit-text-stroke:0.35px #222">Plan Views</div>
<div class="t" style="left:525px;top:145.8px;font-size:11px;font-weight:bold;color:#2858f0;text-decoration:underline;text-underline-offset:0.5px;letter-spacing:0px">PRECIP - Color-Filled Co...</div>
<div class="t" style="left:498.5px;top:174px;font-size:9px;font-weight:bold;color:#111">0</div>
<div class="t" style="left:634.5px;top:174px;font-size:9px;font-weight:bold;color:#111;letter-spacing:0.6px">50</div>
<div class="t" style="left:524.5px;top:191.5px;font-size:11px;font-weight:bold;color:#2858f0;text-decoration:underline;text-underline-offset:0.5px;letter-spacing:0.1px">Psl_et - Contour Plan Vi...</div>
<div class="t" style="left:498px;top:219.3px;font-size:9px;font-weight:bold;color:#111;letter-spacing:1.2px">952</div>
<div class="t" style="left:621px;top:219.3px;font-size:9px;font-weight:bold;color:#111;letter-spacing:1.3px">1052</div>


<!-- status bar -->
<div class="a" style="left:5px;top:454px;width:84px;height:14px;border-top:1px solid #8e8e8a;border-left:1px solid #8e8e8a"></div>
<div class="a" style="left:90.5px;top:454px;width:496px;height:14px;border-top:1px solid #8e8e8a;border-left:1px solid #8e8e8a"></div>
<div class="a" style="left:587px;top:454px;width:108px;height:14px;border-top:1px solid #8e8e8a;border-left:1px solid #8e8e8a"></div>
<div class="t st" style="left:15px">21:15:48 GMT</div>
<div class="t st" style="left:94px">Latitude:</div>
<div class="t st" style="left:146px">66.8</div>
<div class="t st" style="left:178.5px">Longitude:</div>
<div class="t st" style="left:240.3px">-85.5</div>
<div class="t st" style="left:276.8px">Altitude:</div>
<div class="t st" style="left:329.5px">-5693.0 m</div>

</body></html>
